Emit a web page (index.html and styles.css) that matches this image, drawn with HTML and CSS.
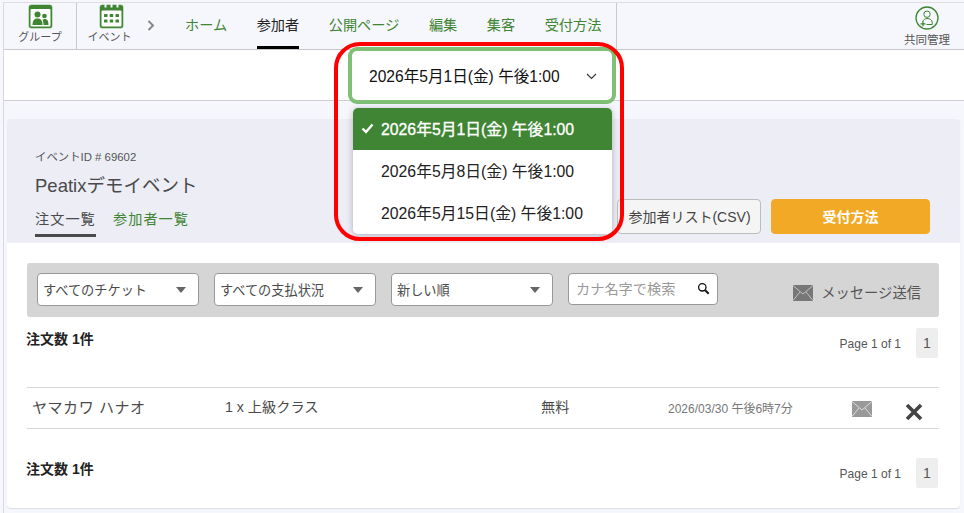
FILE: index.html
```html
<!DOCTYPE html>
<html lang="ja">
<head>
<meta charset="utf-8">
<title>Peatix</title>
<link rel="stylesheet" href="styles.css">
</head>
<body>
<div class="page">
 <div class="frame">
  <header class="topbar">
    <div class="crumb crumb-group">
      <svg class="crumb-icon" width="25" height="25" viewBox="0 0 25 25">
        <rect x="0.5" y="0.5" width="24" height="24" rx="3" fill="#8fc487"/>
        <rect x="1" y="1" width="23" height="23" rx="2.5" fill="#3f8533"/>
        <rect x="2.5" y="5" width="20" height="17.5" rx="1" fill="#fff"/>
        <circle cx="9.5" cy="10.5" r="3" fill="#3f8533"/>
        <circle cx="16.5" cy="12" r="2.3" fill="#3f8533"/>
        <path d="M4.5 21c0-5 2-6.500 5-6.500s5 1.500 5 6.500z" fill="#3f8533"/>
        <path d="M15.500 21c0-2.500-.3-4-1-5.300 .6-.5 1.300-.7 2.200-.7 2.400 0 3.800 1.400 3.800 6z" fill="#3f8533"/>
      </svg>
      <span class="crumb-label">グループ</span>
    </div>
    <div class="crumb crumb-event">
      <svg class="crumb-icon" width="25" height="26" viewBox="0 0 25 26">
        <rect x="0.500" y="1.500" width="24" height="24" rx="3" fill="#8fc487"/>
        <rect x="1" y="2" width="23" height="23" rx="2.500" fill="#3f8533"/>
        <rect x="2.500" y="7.500" width="20" height="16" rx="1" fill="#fff"/>
        <rect x="5.500" y="0" width="2" height="4.500" fill="#f6f7fc"/>
        <rect x="11.500" y="0" width="2" height="4.500" fill="#f6f7fc"/>
        <rect x="17.500" y="0" width="2" height="4.500" fill="#f6f7fc"/>
        <g fill="#3f8533">
          <rect x="5" y="11" width="3.500" height="3" rx=".5"/>
          <rect x="10.700" y="11" width="3.500" height="3" rx=".5"/>
          <rect x="16.500" y="11" width="3.500" height="3" rx=".5"/>
          <rect x="5" y="16.500" width="3.500" height="3" rx=".5"/>
          <rect x="10.700" y="16.500" width="3.500" height="3" rx=".5"/>
          <rect x="16.500" y="16.500" width="3.500" height="3" rx=".5"/>
        </g>
      </svg>
      <span class="crumb-label">イベント</span>
    </div>
    <svg class="crumb-chevron" width="8" height="11" viewBox="0 0 8 11"><path d="M1.500 1l4.500 4.500-4.500 4.500" fill="none" stroke="#888" stroke-width="2"/></svg>
    <nav class="tabs">
      <a class="tab">ホーム</a>
      <a class="tab tab-active">参加者</a>
      <a class="tab">公開ページ</a>
      <a class="tab">編集</a>
      <a class="tab">集客</a>
      <a class="tab">受付方法</a>
    </nav>
    <div class="co-admin">
      <svg width="24" height="24" viewBox="0 0 24 24" fill="none" stroke="#3f8533">
        <circle cx="12" cy="12" r="11" stroke-width="1.300"/>
        <circle cx="12" cy="8.200" r="3.200" stroke-width="1"/>
        <path d="M7.500 15.500c1-1.600 2.500-3 4.500-3 3 0 5.200 1.500 5.200 3.800v2.200H11.500" stroke-width="1"/>
        <path d="M5.500 17.800h5M8 15.300v5" stroke-width="1.300"/>
      </svg>
      <span class="crumb-label co-admin-label">共同管理</span>
    </div>
  </header>

  <div class="date-row"></div>

  <main class="card">
    <section class="card-head">
      <div class="event-id">イベントID # 69602</div>
      <h1 class="event-title">Peatixデモイベント</h1>
      <div class="subtabs">
        <a class="subtab subtab-active">注文一覧</a>
        <a class="subtab">参加者一覧</a>
      </div>
      <div class="head-actions">
        <button class="btn btn-csv">参加者リスト(CSV)</button>
        <button class="btn btn-orange">受付方法</button>
      </div>
    </section>
    <section class="card-body">
      <div class="filters">
        <div class="select"><span>すべてのチケット</span><i class="caret"></i></div>
        <div class="select"><span>すべての支払状況</span><i class="caret"></i></div>
        <div class="select"><span>新しい順</span><i class="caret"></i></div>
        <div class="search">
          <span>カナ名字で検索</span>
          <svg width="13" height="13" viewBox="0 0 13 13" fill="none" stroke="#111"><circle cx="5.300" cy="5.300" r="3.700" stroke-width="1.300"/><path d="M8.200 8.200l3.500 3.500" stroke-width="2"/></svg>
        </div>
        <div class="message">
          <svg width="20" height="16" viewBox="0 0 20 16"><rect width="20" height="16" fill="#777"/><path d="M0 .5l10 8.500 10-8.500M0 15.500l7-8.500M20 15.500l-7-8.500" fill="none" stroke="#d5d5d5" stroke-width=".8"/></svg>
          <span>メッセージ送信</span>
        </div>
      </div>

      <div class="summary summary-top">
        <strong class="count">注文数 1件</strong>
        <div class="pager"><span>Page 1 of 1</span><b class="page-num">1</b></div>
      </div>

      <div class="order-row">
        <span class="o-name">ヤマカワ ハナオ</span>
        <span class="o-ticket">1 x 上級クラス</span>
        <span class="o-pay">無料</span>
        <span class="o-date">2026/03/30 午後6時7分</span>
        <svg class="o-mail" width="20" height="16" viewBox="0 0 20 16"><rect width="20" height="16" fill="#999"/><path d="M0 .5l10 8.500 10-8.500M0 15.500l7-8.500M20 15.500l-7-8.500" fill="none" stroke="#eee" stroke-width=".8"/></svg>
        <svg class="o-x" width="18" height="18" viewBox="0 0 18 18"><path d="M2 2l14 14M16 2L2 16" stroke="#444" stroke-width="3.600" fill="none"/></svg>
      </div>

      <div class="summary summary-bottom">
        <strong class="count">注文数 1件</strong>
        <div class="pager"><span>Page 1 of 1</span><b class="page-num">1</b></div>
      </div>
    </section>
  </main>
 </div>

  <div class="date-select">
    <span>2026年5月1日(金) 午後1:00</span>
    <svg width="11" height="7" viewBox="0 0 11 7"><path d="M1 1l4.500 4.500L10 1" fill="none" stroke="#333" stroke-width="1.100"/></svg>
  </div>
  <ul class="date-menu">
    <li class="date-item date-item-on"><svg class="check" width="13" height="11" viewBox="0 0 13 11"><path d="M1.500 5.500l3.500 3.500 6.500-7.500" fill="none" stroke="#fff" stroke-width="2.400"/></svg>2026年5月1日(金) 午後1:00</li>
    <li class="date-item">2026年5月8日(金) 午後1:00</li>
    <li class="date-item">2026年5月15日(金) 午後1:00</li>
  </ul>
  <div class="highlight"></div>
</div>
</body>
</html>
```

FILE: styles.css
```css
* { box-sizing: border-box; }
html, body { margin: 0; padding: 0; }
body {
  background: #f6f7fc;
  color: #4a4a4a;
  font-family: "Liberation Sans", "Noto Sans CJK JP", sans-serif;
  width: 964px;
  height: 513px;
  overflow: hidden;
}
.page { position: relative; width: 964px; height: 513px; padding: 2px 0 0 3px; }
.frame { height: 511px; border-left: 1px solid #d8d8de; }

.topbar {
  display: flex;
  align-items: stretch;
  height: 48px;
  background: #f6f7fc;
  border-top: 1px solid #dedee2;
  border-bottom: 1px solid #c9c9cd;
}
.crumb { display: flex; flex-direction: column; align-items: center; position: relative; }
.crumb-group { width: 73px; padding-top: 1px; border-right: 1px solid #c9c9cd; }
.crumb-event { width: 67px; padding-top: 0; padding-left: 1px; }
.crumb-icon { display: block; }
.crumb-label { font-size: 11px; line-height: 12px; margin-top: 2px; color: #555; white-space: nowrap; }
.crumb-event .crumb-label { margin-left: -3px; }
.crumb-chevron { align-self: center; margin: -2px 0 0 3px; }
.tabs {
  display: flex;
  gap: 29.500px;
  padding: 0 15px 0 30px;
  border-right: 1px solid #c9c9cd;
}
.tab {
  display: block;
  font-size: 14.200px;
  line-height: 44px;
  height: 46px;
  color: #3f8533;
  white-space: nowrap;
}
.tab-active { color: #222; border-bottom: 3px solid #000; }
.co-admin {
  margin-left: auto;
  margin-right: 7px;
  width: 60px;
  padding: 3px 0 0 0;
  display: flex;
  flex-direction: column;
  align-items: center;
}
.co-admin-label { margin-top: 4px; font-size: 11.500px; }

.date-row { height: 51px; background: #fff; border-bottom: 1px solid #d0d0d4; }

.card {
  margin: 18px 0 0 3px;
  width: 953px;
  height: 389px;
  border-radius: 4px;
  overflow: hidden;
  background: #fff;
  box-shadow: 0 1px 1px #dcdde3;
}
.card-head { height: 124px; background: #ecedf5; padding: 31px 0 0 28px; position: relative; }
.event-id { font-size: 11.400px; line-height: 14px; color: #555; }
.event-title { margin: 10px 0 0; font-size: 18.500px; font-weight: 400; line-height: 24px; color: #4a4a4a; }
.subtabs { display: flex; gap: 17px; margin-top: 11px; }
.subtab { display: block; font-size: 14.200px; letter-spacing: 1px; line-height: 20px; height: 28px; color: #3f8533; white-space: nowrap; }
.subtab-active { color: #4a4a4a; border-bottom: 3px solid #4a4a4a; width: 61px; }
.head-actions { display: flex; gap: 10px; position: absolute; top: 80px; right: 30px; }
.btn { font: inherit; height: 35px; border-radius: 4px; font-size: 14px; padding: 0 0 2px; }
.btn-csv { width: 144px; padding-left: 1px; background: #f5f5f5; border: 1px solid #bcbcbc; color: #444; }
.btn-orange { width: 159px; background: #f2a925; border: 1px solid #f2a925; color: #fff; font-weight: 700; }

.card-body { padding: 20px 21px 0 20px; }
.filters {
  display: flex;
  gap: 15px;
  height: 54px;
  padding: 10px;
  background: #d5d5d5;
  border-radius: 3px;
}
.select, .search {
  display: flex;
  align-items: center;
  justify-content: space-between;
  background: #fff;
  border: 1px solid #999;
  border-radius: 4px;
  font-size: 13.200px;
  color: #4a4a4a;
  white-space: nowrap;
}
.select { width: 162px; height: 33px; padding: 0 12px 1px 5px; }
.search { width: 150px; height: 32px; padding: 0 7px 2px; font-size: 14.200px; color: #999; }
.caret { width: 0; height: 0; border-left: 5px solid transparent; border-right: 5px solid transparent; border-top: 6px solid #666; margin-top: 1px; }
.message { margin: 10px 8px 0 auto; display: flex; align-items: center; gap: 8px; height: 16px; font-size: 14.300px; color: #555; white-space: nowrap; }
.message svg { margin-top: 4px; }

.summary { display: flex; justify-content: space-between; align-items: flex-start; }
.summary-top { height: 70px; padding-top: 11px; }
.summary-bottom { padding-top: 30px; }
.count { display: block; font-size: 14px; line-height: 20px; color: #222; margin-left: -1px; }
.summary-top .count { margin-top: 1px; }
.pager { display: flex; align-items: center; gap: 15px; font-size: 12px; color: #555; margin-right: 1px; }
.pager span { margin-top: 2px; }
.page-num { display: flex; align-items: center; justify-content: center; width: 22px; height: 30px; background: #eee; font-weight: 400; font-size: 14px; color: #555; border-radius: 2px; }
.summary-bottom .pager { margin-top: -1px; }

.order-row {
  display: grid;
  grid-template-columns: 193px 316px 127px 184px 53px 18px;
  align-items: center;
  height: 42px;
  padding-left: 5px;
  border-top: 1px solid #d6d6d6;
  border-bottom: 1px solid #d6d6d6;
  font-size: 14.200px;
  color: #4a4a4a;
  white-space: nowrap;
}
.order-row span { margin-top: -4px; }
.o-name { font-size: 15px; letter-spacing: .55px; }
.order-row .o-date { font-size: 12px; color: #777; margin-top: -2px; }
.o-mail { margin-top: 1px; }
.o-x { margin-top: 8px; }

.date-select {
  position: absolute;
  left: 348px;
  top: 47px;
  width: 268px;
  height: 57px;
  padding: 0 14px 2px 17px;
  display: flex;
  align-items: center;
  justify-content: space-between;
  background: #fff;
  border: 4px solid #7fbf76;
  border-radius: 9px;
  font-size: 15.600px;
  color: #111;
  white-space: nowrap;
}
.date-select svg { margin: 3px 1px 0 0; }
.date-menu {
  position: absolute;
  left: 353px;
  top: 108px;
  width: 259px;
  height: 126px;
  margin: 0;
  padding: 0;
  list-style: none;
  background: #fff;
  border-radius: 5px;
  overflow: hidden;
  box-shadow: 0 1px 6px rgba(60, 60, 90, .35);
}
.date-item {
  position: relative;
  height: 42px;
  line-height: 44px;
  padding-left: 28px;
  font-size: 15.800px;
  color: #222;
  white-space: nowrap;
}
.date-item-on { background: #3f8533; color: #fff; -webkit-text-stroke: .3px #fff; }
.check { position: absolute; left: 8px; top: 15px; }
.highlight {
  position: absolute;
  left: 334px;
  top: 42px;
  width: 290px;
  height: 199px;
  border: 4px solid #f00;
  border-radius: 26px;
  pointer-events: none;
}
```
